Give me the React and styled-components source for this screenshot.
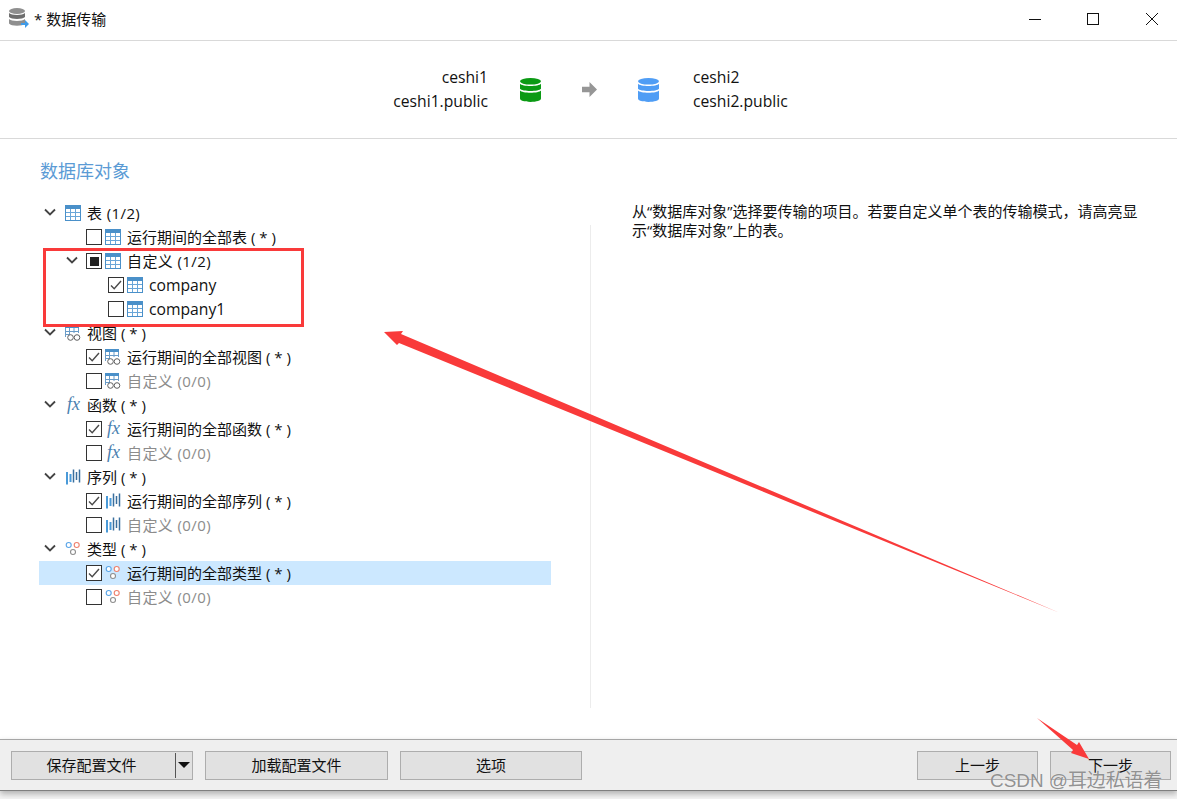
import React from 'react'
import styled, { createGlobalStyle } from 'styled-components'

const GlobalStyle = createGlobalStyle`
  html, body {
    margin: 0;
    padding: 0;
    background: #fff;
  }
  body {
    font-family: "Open Sans", "Noto Sans CJK SC", sans-serif;
    font-size: 15px;
    color: #111;
  }
`

const Page = styled.div`
  position: relative;
  width: 1177px;
  height: 799px;
  overflow: hidden;
  display: flex;
  flex-direction: column;
  background: #fff;
`

const TitleBar = styled.div`
  height: 40px;
  flex: none;
  display: flex;
  align-items: center;
  justify-content: space-between;
  padding-left: 9px;
  border-bottom: 1px solid #d9d9d9;
`

const TitleLeft = styled.div`
  display: flex;
  align-items: center;
  gap: 5px;
  font-size: 15px;
  color: #111;
  margin-top: -4px;
`

const WinButtons = styled.div`
  display: flex;
  align-items: center;
  margin-right: -4px;
  margin-top: -3px;
`

const WinButton = styled.div`
  width: 58.5px;
  height: 38px;
  display: flex;
  align-items: center;
  justify-content: center;
`

const Header = styled.div`
  height: 97px;
  flex: none;
  display: flex;
  align-items: center;
  border-bottom: 1px solid #d9d9d9;
`

const Conn = styled.div`
  width: ${p => p.$w}px;
  text-align: ${p => p.$align};
  line-height: 24px;
  font-size: 15.7px;
  padding-bottom: 2px;
  flex: none;
`

const HeaderIcons = styled.div`
  display: flex;
  align-items: center;
  margin: 0 34px 0 32px;
  gap: 41px;
`

const Body = styled.div`
  flex: 1;
  display: flex;
  min-height: 0;
`

const LeftPane = styled.div`
  width: 551px;
  flex: none;
  padding: 20px 0 0 39px;
  box-sizing: border-box;
`

const SectionTitle = styled.div`
  font-size: 18px;
  line-height: 24px;
  color: #5b9bd5;
  padding-left: 1px;
  margin-bottom: 18px;
`

const Row = styled.div`
  height: 24px;
  display: flex;
  align-items: center;
  padding-left: ${p => p.$pad}px;
  background: ${p => (p.$selected ? '#cce8ff' : 'transparent')};
  color: ${p => (p.$muted ? '#8c8c8c' : '#111')};
  font-size: 15px;
  white-space: nowrap;
`

const Label = styled.span`
  padding-bottom: ${p => (p.$latin ? '0' : '2px')};
  font-size: ${p => (p.$latin ? '15.7px' : '15px')};
  letter-spacing: ${p => (p.$count ? '0.4px' : '0')};
`

const Chevron = styled.svg`
  width: 12px;
  height: 8px;
  flex: none;
  margin-right: ${p => p.$gap}px;
  margin-bottom: 2px;
`

const Check = styled.div`
  width: 14px;
  height: 14px;
  flex: none;
  border: 1px solid #333;
  background: #fff;
  display: flex;
  align-items: center;
  justify-content: center;
  margin-right: 3px;
`

const Square = styled.div`
  width: 9px;
  height: 9px;
  background: #222;
`

const IconBox = styled.svg`
  width: 16px;
  height: 16px;
  flex: none;
  margin-right: 6px;
  overflow: visible;
`

const RightPane = styled.div`
  flex: 1;
  display: flex;
`

const Divider = styled.div`
  width: 1px;
  height: 483px;
  margin: 86px 0 0 39px;
  background: #ececec;
  flex: none;
`

const Help = styled.div`
  width: 512px;
  margin: 63px 0 0 41px;
  font-size: 15px;
  line-height: 19px;
  color: #111;
`

const Footer = styled.div`
  position: relative;
  z-index: 1;
  height: 50px;
  flex: none;
  display: flex;
  align-items: center;
  justify-content: space-between;
  padding: 0 6px 0 11px;
  background: #efefef;
  border-top: 1px solid #a6a6a6;
  border-bottom: 1px solid #7f7f7f;
  box-shadow: 0 3px 6px rgba(0, 0, 0, 0.28);
`

const BottomGap = styled.div`
  height: 8px;
  flex: none;
  background: #f4f4f4;
`

const ButtonGroup = styled.div`
  display: flex;
  gap: ${p => p.$gap}px;
`

const Button = styled.div`
  width: ${p => p.$w}px;
  height: 29px;
  box-sizing: border-box;
  padding-bottom: 2px;
  border: 1px solid #adadad;
  background: #e1e1e1;
  display: flex;
  align-items: center;
  justify-content: center;
  font-size: 15px;
  color: #111;
`

const SplitButton = styled(Button)`
  justify-content: flex-start;
  padding-bottom: 0;
`

const SplitLabel = styled.div`
  width: 159px;
  margin-right: 4px;
  padding-bottom: 2px;
  text-align: center;
`

const SplitDrop = styled.div`
  flex: 1;
  height: 25px;
  border-left: 1px solid #555;
  display: flex;
  align-items: center;
  justify-content: center;
`

const Caret = styled.div`
  width: 0;
  height: 0;
  border-left: 6px solid transparent;
  border-right: 6px solid transparent;
  border-top: 6px solid #111;
`

const Overlay = styled.svg`
  position: absolute;
  left: 0;
  top: 0;
  z-index: 2;
  pointer-events: none;
`

const Watermark = styled.div`
  position: absolute;
  z-index: 3;
  left: 990px;
  top: 769px;
  font-size: 18.9px;
  line-height: 24px;
  color: rgba(118, 118, 118, 0.8);
  text-shadow: 0 0 1px rgba(255, 255, 255, 0.8);
  white-space: nowrap;
  font-family: "Liberation Sans", "Noto Sans CJK SC", sans-serif;
`

const TableIcon = () => (
  <IconBox viewBox="0 0 16 16">
    <rect x="0.5" y="0.5" width="15" height="15" fill="#fff" stroke="#4a90c9" />
    <rect x="0" y="0" width="16" height="4" fill="#4a90c9" />
    <path d="M5.5 4v11M10.500 4v11M1 7.500h14M1 11.500h14" stroke="#6aa6d8" fill="none" />
  </IconBox>
)

const ViewIcon = () => (
  <IconBox viewBox="0 0 16 16">
    <rect x="0" y="0" width="14" height="3" fill="#4a90c9" />
    <path d="M0.500 3v9M4.500 3v8M9 3v5M13.500 3v5M1 6.500h12.500M1 9.500h3" stroke="#6a9cc8" fill="none" />
    <circle cx="5.500" cy="12.500" r="2.800" fill="#fff" stroke="#5f5f5f" />
    <circle cx="12" cy="12.500" r="2.800" fill="#fff" stroke="#5f5f5f" />
  </IconBox>
)

const FxIcon = () => (
  <IconBox viewBox="0 0 16 16">
    <text x="2" y="13" fontFamily="Liberation Serif, serif" fontStyle="italic" fontSize="18" fill="#4a7fb0">
      fx
    </text>
  </IconBox>
)

const SeqIcon = () => (
  <IconBox viewBox="0 0 16 16">
    <path d="M2 3v12.500M5.500 5v8" stroke="#4a9ad8" strokeWidth="2" fill="none" />
    <path d="M8.500 0.500v13M11.500 3v8M14.500 0.500v13" stroke="#3a6f9e" strokeWidth="1.500" fill="none" />
  </IconBox>
)

const TypeIcon = () => (
  <IconBox viewBox="0 0 16 16">
    <circle cx="3.700" cy="4" r="2.500" fill="#fff" stroke="#5aa5e8" strokeWidth="1.100" />
    <circle cx="11.700" cy="4" r="2.500" fill="#fff" stroke="#ee7f6c" strokeWidth="1.100" />
    <circle cx="8" cy="11" r="2.500" fill="#fff" stroke="#8e8e8e" strokeWidth="1.100" />
  </IconBox>
)

const icons = { table: TableIcon, view: ViewIcon, fx: FxIcon, seq: SeqIcon, type: TypeIcon }

const ChevronDown = ({ gap }) => (
  <Chevron viewBox="0 0 12 8" $gap={gap}>
    <path d="M1 1.500l5 5 5-5" fill="none" stroke="#444" strokeWidth="1.800" />
  </Chevron>
)

const CheckBox = ({ state }) => (
  <Check>
    {state === 'on' && (
      <svg width="14" height="14" viewBox="0 0 14 14">
        <path d="M2 7.500l3.200 3.200L12 3" fill="none" stroke="#4a4a4a" strokeWidth="1.400" />
      </svg>
    )}
    {state === 'mixed' && <Square />}
  </Check>
)

// kind: group = top level with chevron, sub = nested chevron + checkbox, item = checkbox row
const rows = [
  { kind: 'group', icon: 'table', label: '表 (1/2)', count: true },
  { kind: 'item', icon: 'table', label: '运行期间的全部表 ( * )', check: 'off', pad: 47 },
  { kind: 'sub', icon: 'table', label: '自定义 (1/2)', check: 'mixed', count: true },
  { kind: 'item', icon: 'table', label: 'company', check: 'on', pad: 69, latin: true },
  { kind: 'item', icon: 'table', label: 'company1', check: 'off', pad: 69, latin: true },
  { kind: 'group', icon: 'view', label: '视图 ( * )' },
  { kind: 'item', icon: 'view', label: '运行期间的全部视图 ( * )', check: 'on', pad: 47 },
  { kind: 'item', icon: 'view', label: '自定义 (0/0)', check: 'off', pad: 47, muted: true, count: true },
  { kind: 'group', icon: 'fx', label: '函数 ( * )' },
  { kind: 'item', icon: 'fx', label: '运行期间的全部函数 ( * )', check: 'on', pad: 47 },
  { kind: 'item', icon: 'fx', label: '自定义 (0/0)', check: 'off', pad: 47, muted: true, count: true },
  { kind: 'group', icon: 'seq', label: '序列 ( * )' },
  { kind: 'item', icon: 'seq', label: '运行期间的全部序列 ( * )', check: 'on', pad: 47 },
  { kind: 'item', icon: 'seq', label: '自定义 (0/0)', check: 'off', pad: 47, muted: true, count: true },
  { kind: 'group', icon: 'type', label: '类型 ( * )' },
  { kind: 'item', icon: 'type', label: '运行期间的全部类型 ( * )', check: 'on', pad: 47, selected: true },
  { kind: 'item', icon: 'type', label: '自定义 (0/0)', check: 'off', pad: 47, muted: true, count: true },
]

const TreeRow = ({ row }) => {
  const Icon = icons[row.icon]
  const pad = row.kind === 'group' ? 5 : row.kind === 'sub' ? 27 : row.pad
  return (
    <Row $pad={pad} $selected={row.selected} $muted={row.muted}>
      {row.kind === 'group' && <ChevronDown gap={9} />}
      {row.kind === 'sub' && <ChevronDown gap={8} />}
      {row.check && <CheckBox state={row.check} />}
      <Icon />
      <Label $latin={row.latin} $count={row.count}>{row.label}</Label>
    </Row>
  )
}

const DbIcon = ({ color }) => (
  <svg width="21" height="24" viewBox="0 0 21 24">
    <ellipse cx="10.500" cy="3.300" rx="10.500" ry="3.300" fill={color} />
    <path d="M0 5.800c2 3 19 3 21 0v5c-2 3-19 3-21 0z" fill={color} />
    <path d="M0 12.600c2 3 19 3 21 0v8c0 2-4.500 3.400-10.500 3.400S0 22.600 0 20.600z" fill={color} />
  </svg>
)

const App = () => (
  <Page>
    <GlobalStyle />
    <TitleBar>
      <TitleLeft>
        <svg width="20" height="20" viewBox="0 0 20 20">
          <ellipse cx="8" cy="3" rx="8" ry="3" fill="#8f8f8f" />
          <path d="M0 5c2 2.500 14 2.500 16 0v4c-2 2.500-14 2.500-16 0z" fill="#6f6f6f" />
          <path d="M0 11c2 2.500 14 2.500 16 0v4.500c-2 3-14 3-16 0z" fill="#8f8f8f" />
          <path d="M12 15h4v-3l4 4-4 4v-3h-4z" fill="#3f9be8" />
        </svg>
        <span>* 数据传输</span>
      </TitleLeft>
      <WinButtons>
        <WinButton>
          <svg width="14" height="14" viewBox="0 0 14 14">
            <path d="M1 7.500h12" stroke="#111" />
          </svg>
        </WinButton>
        <WinButton>
          <svg width="14" height="14" viewBox="0 0 14 14">
            <rect x="1.500" y="1.500" width="11" height="11" fill="none" stroke="#111" />
          </svg>
        </WinButton>
        <WinButton>
          <svg width="14" height="14" viewBox="0 0 14 14">
            <path d="M1 1l12 12M13 1L1 13" stroke="#111" />
          </svg>
        </WinButton>
      </WinButtons>
    </TitleBar>

    <Header>
      <Conn $w={488} $align="right">
        <div>ceshi1</div>
        <div>ceshi1.public</div>
      </Conn>
      <HeaderIcons>
        <DbIcon color="#0b9a14" />
        <svg width="15" height="15" viewBox="0 0 16 16">
          <path d="M0 5h8V0l8 8-8 8v-5H0z" fill="#969696" />
        </svg>
        <DbIcon color="#4f9df5" />
      </HeaderIcons>
      <Conn $w={200} $align="left">
        <div>ceshi2</div>
        <div>ceshi2.public</div>
      </Conn>
    </Header>

    <Body>
      <LeftPane>
        <SectionTitle>数据库对象</SectionTitle>
        {rows.map((row, i) => (
          <TreeRow row={row} key={i} />
        ))}
      </LeftPane>
      <RightPane>
        <Divider />
        <Help>从“数据库对象”选择要传输的项目。若要自定义单个表的传输模式，请高亮显示“数据库对象”上的表。</Help>
      </RightPane>
    </Body>

    <Footer>
      <ButtonGroup $gap={12}>
        <SplitButton $w={182}>
          <SplitLabel>保存配置文件</SplitLabel>
          <SplitDrop>
            <Caret />
          </SplitDrop>
        </SplitButton>
        <Button $w={183}>加载配置文件</Button>
        <Button $w={182}>选项</Button>
      </ButtonGroup>
      <ButtonGroup $gap={12}>
        <Button $w={121}>上一步</Button>
        <Button $w={121}>下一步</Button>
      </ButtonGroup>
    </Footer>
    <BottomGap />

    <Overlay width="1177" height="799" viewBox="0 0 1177 799">
      <rect x="44.500" y="249.500" width="258" height="76" fill="none" stroke="#f93a3a" strokeWidth="3" />
      <path d="M384 332L403 331L401 334L1060 613L399 343L397 345Z" fill="#f93a3a" />
      <path d="M1037 718L1077 745L1079 742L1089 759L1071 753L1073 750Z" fill="#f93a3a" />
    </Overlay>
    <Watermark>CSDN @耳边私语着</Watermark>
  </Page>
)

export default App
